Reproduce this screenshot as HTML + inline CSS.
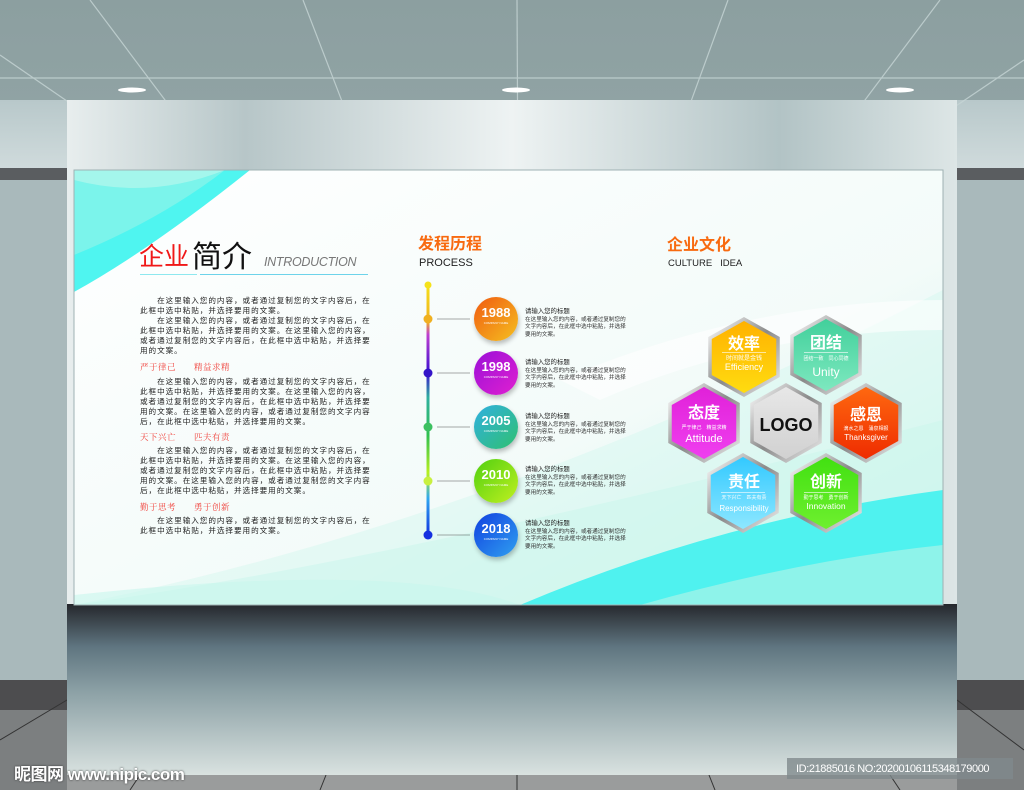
<!DOCTYPE html>
<html><head><meta charset="utf-8"><style>
*{margin:0;padding:0;box-sizing:border-box}
body{width:1024px;height:790px;overflow:hidden;position:relative;background:#a6b8ba;font-family:"Liberation Sans","Noto Sans CJK SC",sans-serif}
.a{position:absolute}
.lt{position:absolute;left:140px;font-size:7.6px;letter-spacing:0.95px;color:#222;white-space:nowrap;line-height:10px}
.rd{color:#f0403a;font-family:"Liberation Serif","Noto Serif CJK SC",serif;font-size:8.5px;letter-spacing:0.5px}
.tt{position:absolute;left:525px;font-size:5.6px;color:#333;line-height:7.6px;white-space:nowrap}
.tt b{font-size:6.4px;font-weight:normal;color:#222;display:block;margin-bottom:1px}
.cir{position:absolute;width:44px;height:44px;border-radius:50%;color:#fff;text-align:center;font-weight:bold;font-size:13px;padding-top:8px;box-shadow:1px 3px 5px rgba(0,0,0,.25)}
.cir i{display:block;font-size:3px;font-style:normal;font-weight:normal;margin-top:1px}
</style></head><body>
<svg class="a" style="left:0;top:0" width="1024" height="790">
<defs>
<linearGradient id="ceil" x1="0" y1="0" x2="0" y2="1"><stop offset="0" stop-color="#8c9fa0"/><stop offset="1" stop-color="#aabdbe"/></linearGradient>
<linearGradient id="side" x1="0" y1="0" x2="0" y2="1"><stop offset="0" stop-color="#b8c8ca"/><stop offset=".3" stop-color="#f4f8f8"/><stop offset=".55" stop-color="#cfdcdc"/><stop offset="1" stop-color="#a8baba"/></linearGradient>
<linearGradient id="pan" x1="0" y1="0" x2="1" y2="0"><stop offset="0" stop-color="#e8eeee"/><stop offset=".2" stop-color="#b7c6c8"/><stop offset=".5" stop-color="#eef3f3"/><stop offset=".8" stop-color="#b2c3c5"/><stop offset="1" stop-color="#dde6e6"/></linearGradient>
<linearGradient id="low" x1="0" y1="0" x2="0" y2="1"><stop offset="0" stop-color="#25272c"/><stop offset=".25" stop-color="#5f7580"/><stop offset=".5" stop-color="#8a9fa4"/><stop offset="1" stop-color="#d9e2e0"/></linearGradient>
<linearGradient id="bd" x1="0" y1="0" x2="1" y2="1"><stop offset="0" stop-color="#ffffff"/><stop offset=".6" stop-color="#f3fbf9"/><stop offset="1" stop-color="#c5f3ea"/></linearGradient>
</defs>
<rect width="1024" height="790" fill="url(#ceil)"/>
<rect y="100" width="1024" height="580" fill="url(#side)"/>
<rect y="168" width="1024" height="12" fill="#5a5d60"/>
<rect y="180" width="1024" height="500" fill="#a9b9bb"/>
<g stroke="#c7d6d6" stroke-width="1.2" opacity=".8">
<line x1="90" y1="0" x2="240" y2="200"/><line x1="303" y1="0" x2="380" y2="200"/><line x1="517" y1="0" x2="518" y2="200"/><line x1="728" y1="0" x2="655" y2="200"/><line x1="940" y1="0" x2="790" y2="200"/>
<line x1="0" y1="78" x2="1024" y2="78"/><line x1="0" y1="55" x2="80" y2="110"/><line x1="1024" y1="60" x2="950" y2="110"/>
</g>
<g fill="#fff"><ellipse cx="132" cy="90" rx="14" ry="2.5"/><ellipse cx="516" cy="90" rx="14" ry="2.5"/><ellipse cx="900" cy="90" rx="14" ry="2.5"/></g>
<rect x="0" y="680" width="67" height="30" fill="#4d4d4f"/><rect x="957" y="680" width="67" height="30" fill="#4d4d4f"/>
<rect x="0" y="710" width="67" height="80" fill="#7c7f80"/><rect x="957" y="710" width="67" height="80" fill="#7c7f80"/>
<rect x="67" y="775" width="890" height="15" fill="#9a9c9c"/>
<g stroke="#333" stroke-width="1"><line x1="130" y1="790" x2="140" y2="775"/><line x1="320" y1="790" x2="326" y2="775"/><line x1="517" y1="790" x2="517" y2="775"/><line x1="715" y1="790" x2="709" y2="775"/><line x1="900" y1="790" x2="890" y2="775"/><line x1="0" y1="740" x2="67" y2="700"/><line x1="957" y1="700" x2="1024" y2="750"/></g>
<rect x="67" y="100" width="890" height="506" fill="url(#pan)"/>
<rect x="67" y="604" width="890" height="171" fill="url(#low)"/>
<rect x="74" y="170" width="869" height="435" fill="url(#bd)"/>
<path d="M74 170 L250 170 Q150 250 74 292 Z" fill="#4ff5f0"/>
<path d="M74 170 L225 170 Q160 220 74 255 Z" fill="#8ef3e8" opacity=".7"/>
<path d="M74 180 Q150 200 225 170 L74 170Z" fill="#b7f6ec" opacity=".7"/>
<path d="M74 605 Q400 560 943 420 L943 605 Z" fill="#c4f5ea" opacity=".6"/>
<path d="M74 605 Q500 520 943 290 L943 605 Z" fill="#d6f8f0" opacity=".5"/>
<path d="M520 605 Q720 520 943 490 L943 605 Z" fill="#4ff2ef"/>
<path d="M640 605 Q800 560 943 545 L943 605 Z" fill="#8ef3ea"/>
<path d="M74 595 Q400 560 520 605 L74 605Z" fill="#c8f6ec" opacity=".6"/>
<path d="M560 380 Q750 300 943 300 L943 330 Q760 330 600 400Z" fill="#fff" opacity=".6"/>
<rect x="74" y="170" width="869" height="435" fill="none" stroke="#9fb1b3" stroke-width="1"/>
<defs><linearGradient id="tl" x1="0" y1="0" x2="0" y2="1"><stop offset="0" stop-color="#f5e21a"/><stop offset=".15" stop-color="#f0b020"/><stop offset=".2" stop-color="#c040d0"/><stop offset=".35" stop-color="#3d10d0"/><stop offset=".45" stop-color="#30b0a0"/><stop offset=".6" stop-color="#30c050"/><stop offset=".75" stop-color="#b8f020"/><stop offset=".85" stop-color="#30a8f0"/><stop offset="1" stop-color="#1030e0"/></linearGradient></defs>
<rect x="426.5" y="284" width="3" height="252" fill="url(#tl)"/>
<circle cx="428" cy="285" r="3.5" fill="#f5e21a"/>
<circle cx="428" cy="319" r="4.5" fill="#f0b020"/><circle cx="428" cy="373" r="4.5" fill="#3414c8"/><circle cx="428" cy="427" r="4.5" fill="#3cc060"/><circle cx="428" cy="481" r="4.5" fill="#c8f040"/><circle cx="428" cy="535" r="4.5" fill="#1530e0"/>
<g stroke="#555" stroke-width=".6"><line x1="437" y1="319" x2="470" y2="319"/><line x1="437" y1="373" x2="470" y2="373"/><line x1="437" y1="427" x2="470" y2="427"/><line x1="437" y1="481" x2="470" y2="481"/><line x1="437" y1="535" x2="470" y2="535"/></g>
<rect x="140" y="274" width="57" height="1" fill="#8ee8ef"/><rect x="200" y="274" width="168" height="1" fill="#6dd3ea"/>
<defs>
<linearGradient id="h1" x1="0" y1="0" x2="0" y2="1"><stop offset="0" stop-color="#ffb000"/><stop offset="1" stop-color="#ffdd10"/></linearGradient>
<linearGradient id="h2" x1="0" y1="0" x2="0" y2="1"><stop offset="0" stop-color="#40cf9a"/><stop offset="1" stop-color="#7fe9c0"/></linearGradient>
<linearGradient id="h3" x1="0" y1="0" x2="0" y2="1"><stop offset="0" stop-color="#e020d8"/><stop offset="1" stop-color="#f040f0"/></linearGradient>
<linearGradient id="h4" x1="0" y1="0" x2="0" y2="1"><stop offset="0" stop-color="#e8e8e8"/><stop offset="1" stop-color="#d0d0d0"/></linearGradient>
<linearGradient id="h5" x1="0" y1="0" x2="0" y2="1"><stop offset="0" stop-color="#ff6a10"/><stop offset="1" stop-color="#ee2a00"/></linearGradient>
<linearGradient id="h6" x1="0" y1="0" x2="0" y2="1"><stop offset="0" stop-color="#30c8ff"/><stop offset="1" stop-color="#90e8ff"/></linearGradient>
<linearGradient id="h7" x1="0" y1="0" x2="0" y2="1"><stop offset="0" stop-color="#40e010"/><stop offset="1" stop-color="#70f030"/></linearGradient>
<linearGradient id="sv" x1="0" y1="0" x2="1" y2="1"><stop offset="0" stop-color="#fff"/><stop offset=".5" stop-color="#8a8a8a"/><stop offset="1" stop-color="#eee"/></linearGradient>
<polygon id="hx" points="0,-38 34,-19 34,19 0,38 -34,19 -34,-19"/>
</defs>
<g stroke="url(#sv)" stroke-width="3.5">
<use href="#hx" x="744" y="357" fill="url(#h1)"/>
<use href="#hx" x="826" y="355" fill="url(#h2)"/>
<use href="#hx" x="704" y="423" fill="url(#h3)"/>
<use href="#hx" x="786" y="423" fill="url(#h4)"/>
<use href="#hx" x="866" y="423" fill="url(#h5)"/>
<use href="#hx" x="743" y="493" fill="url(#h6)"/>
<use href="#hx" x="826" y="493" fill="url(#h7)"/>
</g>
<g fill="#fff" text-anchor="middle" font-family="Liberation Sans,Noto Sans CJK SC,sans-serif">
<text x="744" y="349" font-size="16" font-weight="bold">效率</text><rect x="722" y="352" width="44" height=".6"/><text x="744" y="360" font-size="6">时间就是金钱</text><text x="744" y="370" font-size="9">Efficiency</text>
<text x="826" y="348" font-size="16" font-weight="bold">团结</text><rect x="804" y="352" width="44" height=".6"/><text x="826" y="360" font-size="5">团结一致　同心同德</text><text x="826" y="376" font-size="12">Unity</text>
<text x="704" y="418" font-size="16" font-weight="bold">态度</text><text x="704" y="429" font-size="5">严于律己　精益求精</text><text x="704" y="442" font-size="11">Attitude</text>
<text x="786" y="431" font-size="18" font-weight="bold" fill="#111">LOGO</text>
<text x="866" y="420" font-size="16" font-weight="bold">感恩</text><text x="866" y="430" font-size="5">滴水之恩　涌泉相报</text><text x="866" y="440" font-size="8">Thanksgiver</text>
<text x="744" y="487" font-size="16" font-weight="bold">责任</text><rect x="721" y="492" width="44" height=".6"/><text x="744" y="499" font-size="5">天下兴亡　匹夫有责</text><text x="744" y="511" font-size="8">Responsibility</text>
<text x="826" y="487" font-size="16" font-weight="bold">创新</text><rect x="804" y="492" width="44" height=".6"/><text x="826" y="499" font-size="5">勤于思考　勇于创新</text><text x="826" y="509" font-size="8.5">Innovation</text>
</g>
<rect x="787" y="758" width="226" height="21" fill="#7f8a8c" opacity=".8"/>
</svg>

<div class="a" style="left:139px;top:237px;font-size:25px;color:#f01818">企业</div>
<div class="a" style="left:192px;top:232px;font-size:30px;color:#111">简介</div>
<div class="a" style="left:264px;top:255px;font-size:12.5px;color:#777;font-style:italic;letter-spacing:-.3px">INTRODUCTION</div>

<div class="lt" style="top:296px">　　在这里输入您的内容，或者通过复制您的文字内容后，在<br>此框中选中粘贴，并选择要用的文案。<br>　　在这里输入您的内容，或者通过复制您的文字内容后，在<br>此框中选中粘贴，并选择要用的文案。在这里输入您的内容，<br>或者通过复制您的文字内容后，在此框中选中粘贴，并选择要<br>用的文案。</div>
<div class="lt rd" style="top:362px">严于律己　　精益求精</div>
<div class="lt" style="top:377px">　　在这里输入您的内容，或者通过复制您的文字内容后，在<br>此框中选中粘贴，并选择要用的文案。在这里输入您的内容，<br>或者通过复制您的文字内容后，在此框中选中粘贴，并选择要<br>用的文案。在这里输入您的内容，或者通过复制您的文字内容<br>后，在此框中选中粘贴，并选择要用的文案。</div>
<div class="lt rd" style="top:432px">天下兴亡　　匹夫有责</div>
<div class="lt" style="top:446px">　　在这里输入您的内容，或者通过复制您的文字内容后，在<br>此框中选中粘贴，并选择要用的文案。在这里输入您的内容，<br>或者通过复制您的文字内容后，在此框中选中粘贴，并选择要<br>用的文案。在这里输入您的内容，或者通过复制您的文字内容<br>后，在此框中选中粘贴，并选择要用的文案。</div>
<div class="lt rd" style="top:502px">勤于思考　　勇于创新</div>
<div class="lt" style="top:516px">　　在这里输入您的内容，或者通过复制您的文字内容后，在<br>此框中选中粘贴，并选择要用的文案。</div>

<div class="a" style="left:418px;top:230px;font-size:16px;font-weight:bold;color:#f86a10">发程历程</div>
<div class="a" style="left:419px;top:257px;font-size:11px;color:#222">PROCESS</div>
<div class="a" style="left:667px;top:231px;font-size:16px;font-weight:bold;color:#f86a10">企业文化</div>
<div class="a" style="left:668px;top:258px;font-size:9.5px;color:#222">CULTURE&nbsp;&nbsp;&nbsp;IDEA</div>

<div class="cir" style="left:474px;top:297px;background:linear-gradient(135deg,#f05a10,#f5c020)">1988<i>COMPANY NAME</i></div>
<div class="cir" style="left:474px;top:351px;background:linear-gradient(135deg,#9a10d8,#e020d0)">1998<i>COMPANY NAME</i></div>
<div class="cir" style="left:474px;top:405px;background:linear-gradient(135deg,#30b0e0,#30c070)">2005<i>COMPANY NAME</i></div>
<div class="cir" style="left:474px;top:459px;background:linear-gradient(135deg,#50d010,#c0f020)">2010<i>COMPANY NAME</i></div>
<div class="cir" style="left:474px;top:513px;background:linear-gradient(135deg,#1040e0,#30a0f0)">2018<i>COMPANY NAME</i></div>

<div class="tt" style="top:308px"><b>请输入您的标题</b>在这里输入您的内容，或者通过复制您的<br>文字内容后，在此框中选中粘贴，并选择<br>要用的文案。</div>
<div class="tt" style="top:359px"><b>请输入您的标题</b>在这里输入您的内容，或者通过复制您的<br>文字内容后，在此框中选中粘贴，并选择<br>要用的文案。</div>
<div class="tt" style="top:413px"><b>请输入您的标题</b>在这里输入您的内容，或者通过复制您的<br>文字内容后，在此框中选中粘贴，并选择<br>要用的文案。</div>
<div class="tt" style="top:466px"><b>请输入您的标题</b>在这里输入您的内容，或者通过复制您的<br>文字内容后，在此框中选中粘贴，并选择<br>要用的文案。</div>
<div class="tt" style="top:520px"><b>请输入您的标题</b>在这里输入您的内容，或者通过复制您的<br>文字内容后，在此框中选中粘贴，并选择<br>要用的文案。</div>

<div class="a" style="left:14px;top:760px;font-size:17px;color:#fff;font-weight:bold;text-shadow:0 0 2px #333;letter-spacing:-.5px">昵图网 www.nipic.com</div>
<div class="a" style="left:796px;top:763px;font-size:11px;color:#fff;letter-spacing:-.4px">ID:21885016 NO:20200106115348179000</div>
</body></html>
